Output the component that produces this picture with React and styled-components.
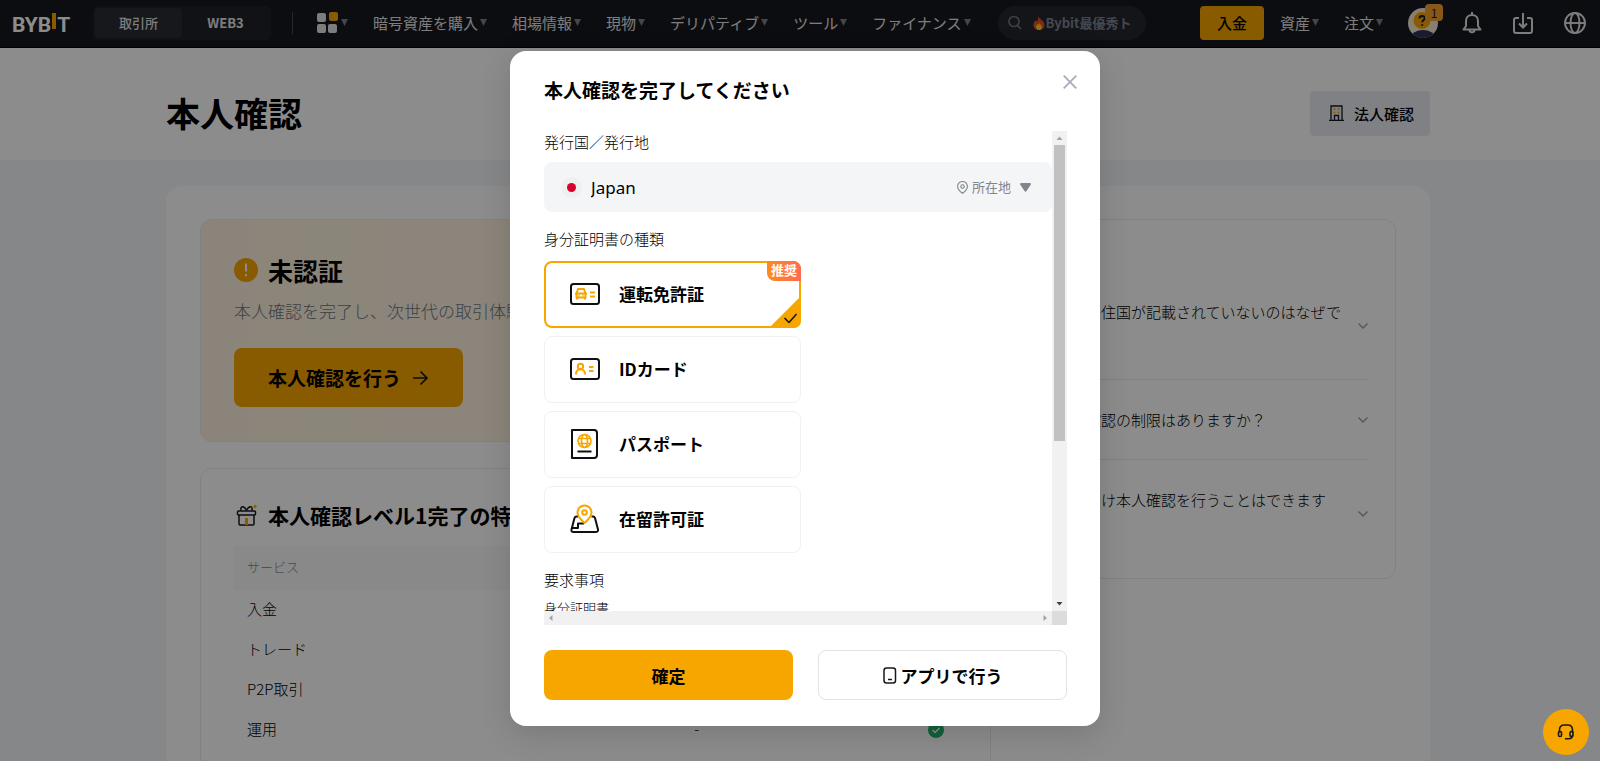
import React from "react";
import styled, { createGlobalStyle } from "styled-components";

const GlobalStyle = createGlobalStyle`
  *, *::before, *::after { box-sizing: border-box; }
  body {
    margin: 0;
    color: #000;
    font-family: "Noto Sans CJK JP", "Noto Sans", sans-serif;
    font-size: 15px;
    font-weight: 300;
  }
  button, input, select { font-family: inherit; color: #000; }
  button { cursor: pointer; }
  h1, h2, p { margin: 0; }
`;

const Page = styled.div`
  position: relative;
  display: flex;
  flex-direction: column;
  height: 100vh;
  overflow: hidden;
  background: #f4f6f9;
`;

/* ---------- header ---------- */

const Header = styled.header`
  flex: none;
  display: flex;
  align-items: center;
  height: 48px;
  padding: 0 14px 2px 12px;
  background: #17181e;
  border-bottom: 1px solid #000;
  color: #e4e4e4;
`;

const Logo = styled.a`
  display: flex;
  align-items: center;
  width: 61px;
  height: 40px;
  padding-top: 4px;
  color: #fff;
  font: 700 21px/24px Roboto, sans-serif;
  text-decoration: none;
`;

const LogoBar = styled.span`
  flex: none;
  width: 4px;
  height: 16px;
  margin: 0 1px 8px;
  background: #f7a600;
`;

const ModeSwitch = styled.div`
  display: flex;
  width: 178px;
  height: 34px;
  margin-left: 20px;
  padding: 2px;
  border-radius: 5px;
  background: #1f2127;
`;

const ModeButton = styled.button`
  flex: 1;
  border: 0;
  border-radius: 4px;
  background: ${(p) => (p.$active ? "#292c33" : "transparent")};
  color: #e4e4e4;
  font-size: 13px;
  font-weight: ${(p) => (p.$active ? 500 : 700)};
`;

const Divider = styled.span`
  width: 1px;
  height: 22px;
  margin: 0 24px 0 21px;
  background: #45474d;
`;

const Nav = styled.nav`
  display: flex;
  align-items: center;
  gap: 25px;
`;

const NavItem = styled.a`
  display: flex;
  align-items: center;
  gap: 2px;
  color: #e4e4e4;
  font-size: 15px;
  font-weight: 400;
  line-height: 24px;
  text-decoration: none;
  white-space: nowrap;
`;

const Search = styled.label`
  display: flex;
  align-items: center;
  width: 148px;
  height: 34px;
  margin-left: 27px;
  padding: 0 12px 0 10px;
  border-radius: 17px;
  background: #25272e;
`;

const SearchInput = styled.input`
  min-width: 0;
  flex: 1;
  padding: 0;
  border: 0;
  outline: 0;
  background: transparent;
  color: #fff;
  font-size: 13px;
  font-weight: 700;
  &::placeholder { color: #7d8494; opacity: 1; }
`;

const Fire = styled.svg`
  flex: none;
  margin: 0 1px 0 11px;
`;

const Actions = styled.div`
  display: flex;
  align-items: center;
  margin-left: auto;
`;

const Deposit = styled.button`
  width: 64px;
  height: 34px;
  margin-right: 16px;
  padding: 0;
  border: 0;
  border-radius: 4px;
  background: #f7a600;
  font-size: 15px;
  font-weight: 500;
`;

const Account = styled.button`
  position: relative;
  display: flex;
  width: 30px;
  height: 30px;
  margin: 0 24px 0 25px;
  padding: 0;
  border: 0;
  background: none;
`;

const Badge = styled.span`
  position: absolute;
  top: -4px;
  right: -5px;
  width: 18px;
  height: 17px;
  border-radius: 4px;
  background: #f7a02c;
  color: #17181e;
  font-size: 12px;
  font-weight: 400;
  line-height: 17px;
  text-align: center;
`;

const IconRow = styled.div`
  display: flex;
  gap: 30px;
`;

const IconButton = styled.button`
  display: flex;
  padding: 0;
  border: 0;
  background: none;
  color: #e4e4e4;
`;

/* ---------- page body ---------- */

const TitleBand = styled.section`
  flex: none;
  height: 112px;
  padding-right: 4px;
  background: #fff;
`;

const Container = styled.div`
  display: flex;
  align-items: center;
  justify-content: space-between;
  max-width: 1264px;
  height: 100%;
  margin: 0 auto;
  padding-top: 18px;
`;

const PageTitle = styled.h1`
  font-size: 34px;
  font-weight: 700;
  line-height: 40px;
`;

const Business = styled.button`
  display: flex;
  align-items: center;
  gap: 10px;
  height: 45px;
  padding: 0 16px 0 19px;
  border: 0;
  border-radius: 4px;
  background: #e9ecf3;
  font-size: 15px;
  font-weight: 500;
`;

const Body = styled.main`
  flex: 1;
  min-height: 0;
  padding: 26px 4px 0 0;
`;

const Sheet = styled.div`
  display: grid;
  grid-template-columns: minmax(0, 791fr) minmax(0, 379fr);
  gap: 26px;
  align-items: start;
  max-width: 1264px;
  margin: 0 auto;
  padding: 33px 34px;
  border-radius: 16px;
  background: #fff;
`;

const Column = styled.div`
  display: flex;
  flex-direction: column;
  gap: 26px;
`;

const Card = styled.section`
  border: 1px solid #e9ebef;
  border-radius: 12px;
  padding: 33px;
`;

const StatusCard = styled(Card)`
  padding: 32px 33px 34px;
  background: linear-gradient(90deg, #fff0de 0%, #fdf4df 15%, #fdf1e4 60%, #fff8f2 100%);
`;

const CardTitle = styled.h2`
  display: flex;
  align-items: center;
  gap: 10px;
  font-size: ${(p) => (p.$large ? 25 : 21)}px;
  font-weight: 700;
  line-height: 36px;
`;

const Lead = styled.p`
  margin: 9px 0 23px;
  color: #71757f;
  font-size: 17px;
  line-height: 28px;
`;

const VerifyButton = styled.button`
  display: flex;
  align-items: center;
  gap: 10px;
  height: 59px;
  padding: 0 34px;
  border: 0;
  border-radius: 8px;
  background: #f7a600;
  font-size: 19px;
  font-weight: 700;
`;

const BenefitCard = styled(Card)`
  padding-top: 28px;
`;

const Table = styled.table`
  width: 100%;
  margin-top: 13px;
  border-collapse: collapse;
`;

const HeadCell = styled.th`
  height: 44px;
  padding: 0 13px 4px;
  background: #f9f9fa;
  color: #81858c;
  font-size: 13px;
  font-weight: 300;
  text-align: ${(p) => p.$align || "left"};
`;

const Cell = styled.td`
  width: ${(p) => p.$width || "auto"};
  height: 40px;
  padding: 0 13px 4px;
  font-size: 15px;
  text-align: ${(p) => p.$align || "left"};
  svg { display: inline-block; vertical-align: middle; }
`;

const FaqCard = styled(Card)`
  padding: 16px 26px 11px 38px;
`;

const FaqTitle = styled.h2`
  font-size: 19px;
  font-weight: 500;
  line-height: 36px;
`;

const Question = styled.button`
  display: flex;
  align-items: center;
  gap: 12px;
  width: 100%;
  padding: 26px 0 25px;
  border: 0;
  border-top: ${(p) => (p.$first ? "0" : "1px solid #e9ebef")};
  background: none;
  font-size: 15px;
  font-weight: 300;
  line-height: 28px;
  text-align: left;
  span { flex: 1; }
  svg { flex: none; }
`;

/* ---------- dialog ---------- */

const Overlay = styled.div`
  position: absolute;
  inset: 0;
  display: flex;
  align-items: flex-start;
  justify-content: center;
  padding: 51px 0 0 10px;
  background: rgba(0, 0, 0, 0.45);
`;

const Dialog = styled.section`
  display: flex;
  flex-direction: column;
  width: 590px;
  max-width: 100%;
  padding: 24px 33px 26px 34px;
  border-radius: 16px;
  background: #fff;
  box-shadow: 0 8px 32px rgba(0, 0, 0, 0.14);
`;

const DialogHead = styled.div`
  display: flex;
  align-items: flex-start;
  justify-content: space-between;
  height: 56px;
`;

const DialogTitle = styled.h2`
  font-size: 19px;
  font-weight: 700;
  line-height: 30px;
`;

const Close = styled.button`
  display: flex;
  margin-right: -10px;
  padding: 0;
  border: 0;
  background: none;
`;

const ScrollFrame = styled.div`
  display: grid;
  grid-template-columns: minmax(0, 1fr) 15px;
  grid-template-rows: 480px 14px;
`;

const ScrollView = styled.div`
  overflow: hidden;
`;

const VerticalBar = styled.div`
  display: flex;
  flex-direction: column;
  align-items: center;
  background: #f1f1f1;
`;

const HorizontalBar = styled.div`
  display: flex;
  justify-content: space-between;
  background: #f1f1f1;
`;

const BarArrow = styled.svg`
  flex: none;
  display: block;
`;

const Thumb = styled.div`
  width: 11px;
  height: 296px;
  margin-bottom: auto;
  background: #c1c1c1;
`;

const Corner = styled.div`
  background: #dcdcdc;
`;

const FieldLabel = styled.label`
  display: block;
  margin-top: ${(p) => (p.$spaced ? 16 : 0)}px;
  font-size: 15px;
  line-height: 22px;
`;

const Group = styled.fieldset`
  min-width: 0;
  margin: 16px 0 0;
  padding: 0;
  border: 0;
`;

const Legend = styled.legend`
  padding: 0;
  font-size: 15px;
  line-height: 22px;
`;

const CountryBox = styled.div`
  display: flex;
  align-items: center;
  height: 50px;
  margin-top: 9px;
  padding: 0 21px 0 17px;
  border-radius: 8px;
  background: #f3f5f7;
  color: #81858c;
`;

const CountrySelect = styled.select`
  flex: 1;
  height: 100%;
  padding: 0 0 0 9px;
  border: 0;
  outline: 0;
  appearance: none;
  background: transparent;
  color: #000;
  font-family: "Noto Sans", sans-serif;
  font-size: 17px;
  font-weight: 400;
`;

const Located = styled.span`
  display: flex;
  align-items: center;
  gap: 4px;
  margin-right: 9px;
  font-size: 13px;
  font-weight: 400;
  line-height: 20px;
`;

const Options = styled.div`
  display: flex;
  flex-direction: column;
  gap: 8px;
  width: 257px;
  margin-top: 11px;
`;

const Option = styled.label`
  position: relative;
  display: flex;
  align-items: center;
  gap: 18px;
  height: 67px;
  padding: 0 0 2px 24px;
  border: 1px solid #f1f1f1;
  border-radius: 8px;
  font-size: 17px;
  font-weight: 700;
  cursor: pointer;
  &:has(input:checked) { border: 2px solid #f7a600; padding-left: 23px; }
`;

const HiddenRadio = styled.input`
  position: absolute;
  opacity: 0;
  margin: 0;
`;

const Recommended = styled.span`
  position: absolute;
  top: -2px;
  right: -2px;
  width: 34px;
  height: 20px;
  border-radius: 0 8px 0 8px;
  background: linear-gradient(90deg, #ff8a1c, #ff6a55);
  color: #fff;
  font-size: 13px;
  font-weight: 700;
  line-height: 18px;
  text-align: center;
`;

const Selected = styled.svg`
  position: absolute;
  right: -2px;
  bottom: -2px;
`;

const Note = styled.p`
  margin-top: 6px;
  font-size: 13px;
  line-height: 22px;
`;

const Footer = styled.div`
  display: grid;
  grid-template-columns: 1fr 1fr;
  gap: 25px;
  margin-top: 25px;
`;

const DialogButton = styled.button`
  display: flex;
  align-items: center;
  justify-content: center;
  gap: 4px;
  height: 50px;
  border: ${(p) => (p.$primary ? "0" : "1px solid #e2e3e8")};
  border-radius: 8px;
  background: ${(p) => (p.$primary ? "#f7a600" : "#fff")};
  font-size: 17px;
  font-weight: 700;
`;

const Help = styled.button`
  position: absolute;
  right: 11px;
  bottom: 6px;
  display: flex;
  align-items: center;
  justify-content: center;
  width: 46px;
  height: 46px;
  padding: 0;
  border: 0;
  border-radius: 50%;
  background: #f7a600;
`;

/* ---------- icons ---------- */

const Caret = () => (
  <svg width="7" height="7" viewBox="0 0 7 7"><path d="M0 0h7L3.5 7z" fill="#7c7e84" /></svg>
);

const Chevron = () => (
  <svg width="12" height="8" viewBox="0 0 12 8" fill="none">
    <path d="M1.5 1.5 6 6l4.500-4.500" stroke="#9a9da6" strokeWidth="1.400" />
  </svg>
);

const AppsIcon = () => (
  <svg width="22" height="21" viewBox="0 0 22 21" fill="#e4e4e4">
    <rect x="0" y="1" width="9" height="9" rx="2" />
    <rect x="12" y="0" width="9" height="9" rx="2" fill="#f7a600" />
    <rect x="0" y="12" width="9" height="9" rx="2" />
    <rect x="11" y="12" width="9" height="9" rx="2" />
  </svg>
);

const SearchIcon = () => (
  <svg width="14" height="15" viewBox="0 0 14 15" fill="none" stroke="#71747c" strokeWidth="1.700">
    <circle cx="6" cy="6.500" r="5" /><path d="m9.500 10.500 3.500 3.500" />
  </svg>
);

const AvatarIcon = () => (
  <svg width="30" height="30" viewBox="0 0 30 30">
    <clipPath id="face"><circle cx="15" cy="15" r="15" /></clipPath>
    <g clipPath="url(#face)">
      <rect width="30" height="30" fill="#f5ead0" />
      <ellipse cx="15" cy="30" rx="12" ry="8" fill="#2a3358" />
    </g>
    <circle cx="14" cy="12.500" r="8.500" fill="#f7a600" />
    <path d="M11.500 10.500c.2-3.500 5.400-3.200 5.200-.2-.1 1.700-2.400 1.900-2.500 3.900m0 2v1.600" fill="none" stroke="#17181e" strokeWidth="2" />
  </svg>
);

const BellIcon = () => (
  <svg width="20" height="22" viewBox="0 0 20 22" fill="none" stroke="currentColor" strokeWidth="2" strokeLinejoin="round">
    <path d="M10 0v3M10 3C6.300 3 4 5.800 4 9v5l-2.500 3.500h17L16 14V9c0-3.200-2.300-6-6-6zM7.500 18c.2 3 4.800 3 5 0" />
  </svg>
);

const DownloadIcon = () => (
  <svg width="22" height="22" viewBox="0 0 22 22" fill="none" stroke="currentColor" strokeWidth="2">
    <path d="M7 6H4Q2 6 2 8v11q0 2 2 2h14q2 0 2-2V8q0-2-2-2h-3M11 1v14M7 11.500l4 4 4-4" />
  </svg>
);

const GlobeIcon = () => (
  <svg width="22" height="22" viewBox="0 0 22 22" fill="none" stroke="currentColor" strokeWidth="1.900">
    <circle cx="11" cy="11" r="10" /><ellipse cx="11" cy="11" rx="4.500" ry="10" /><path d="M1 11h20" />
  </svg>
);

const BuildingIcon = () => (
  <svg width="15" height="16" viewBox="0 0 15 16" fill="none" stroke="#17181e" strokeWidth="1.300">
    <path d="M0 15.300h15M2 15V1h11v14M5.500 15v-4.500h4V15" />
    <path d="M5.500 3v2m0 1.500v2M9.500 3v2m0 1.500v2" stroke="#f7a600" strokeWidth="2" />
  </svg>
);

const WarnIcon = () => (
  <svg width="24" height="24" viewBox="0 0 24 24">
    <circle cx="12" cy="12" r="12" fill="#f7a600" />
    <path d="M12 5.500v8m0 2.500v2.200" stroke="#fff" strokeWidth="2" />
  </svg>
);

const ArrowIcon = () => (
  <svg width="18" height="18" viewBox="0 0 18 18" fill="none" stroke="#17181e" strokeWidth="1.700">
    <path d="M2 9h13.500M9.500 2.500 16 9l-6.500 6.500" />
  </svg>
);

const GiftIcon = () => (
  <svg width="24" height="24" viewBox="0 0 24 24" fill="none" stroke="#17181e" strokeWidth="1.500">
    <rect x="3.500" y="8" width="18" height="4" rx="1" />
    <path d="M5 12v9q0 1 1 1h13q1 0 1-1v-9M12.500 7.500C10 2 6 3 7 7.500M12.500 7.500C15 2 19 3 18 7.500" />
    <path d="M11 15h3v7h-3zM21 1l.8 1.800L23.500 3.500l-1.700.8L21 6l-.8-1.700-1.700-.8 1.700-.7z" fill="#f7a600" stroke="none" />
  </svg>
);

const CheckIcon = () => (
  <svg width="16" height="16" viewBox="0 0 16 16">
    <circle cx="8" cy="8" r="8" fill="#20b26c" />
    <path d="m4.500 8 2.500 2.500L11.500 6" fill="none" stroke="#fff" strokeWidth="1.500" />
  </svg>
);

const FlagIcon = () => (
  <svg width="21" height="21" viewBox="0 0 21 21">
    <circle cx="10.500" cy="10.500" r="10.500" fill="#efefef" /><circle cx="10.500" cy="10.500" r="4.500" fill="#d80027" />
  </svg>
);

const PinIcon = () => (
  <svg width="11" height="13" viewBox="0 0 11 13" fill="none" stroke="#81858c" strokeWidth="1.100">
    <path d="M5.500 12.300C2.500 10 .6 8 .6 5.400a4.900 4.900 0 0 1 9.800 0c0 2.600-1.900 4.600-4.900 6.900z" /><circle cx="5.500" cy="5.500" r="1.700" />
  </svg>
);

const OptionIcon = ({ children }) => (
  <svg width="32" height="32" viewBox="0 0 32 32" fill="none" stroke="#101010" strokeWidth="2" strokeLinejoin="round">
    {children}
  </svg>
);

const LicenceIcon = () => (
  <OptionIcon>
    <rect x="2" y="6" width="28" height="20" rx="2.500" />
    <g stroke="#f7a600">
      <path d="M6 15.500h12M7.500 15.500l1.500-4.500h6l1.500 4.500v4h-9zM8 19v2.500M16 19v2.500M9.500 17.500h1M13.500 17.500h1M21 14.500h5M21 18.500h5" />
    </g>
  </OptionIcon>
);

const IdIcon = () => (
  <OptionIcon>
    <rect x="2" y="6" width="28" height="20" rx="2.500" />
    <g stroke="#f7a600">
      <circle cx="11.500" cy="13.500" r="2.700" /><path d="M7 21.500c0-7 9-7 9 0M20 14h4.500M20 18h4.500" />
    </g>
  </OptionIcon>
);

const PassportIcon = () => (
  <OptionIcon>
    <path d="M3 2h22q3 0 3 3v22q0 3-3 3H3zM8.500 23.500h14" />
    <g stroke="#f7a600" strokeWidth="1.600">
      <circle cx="15.500" cy="13" r="6.500" /><ellipse cx="15.500" cy="13" rx="3" ry="6.500" /><path d="M9.500 10.500h12M9.500 15.500h12" />
    </g>
  </OptionIcon>
);

const ResidenceIcon = () => (
  <OptionIcon>
    <path d="M9 13.500H7.500Q6 13.500 5.500 15L2.500 26.500Q2 29 4.500 29h22q3 0 2.500-2.500L26 15q-.5-1.500-2-1.500h-1.500M3 25h6v-4.500h6" />
    <path d="M15.500 20C11 16 8.500 13 8.500 9.500a7 7 0 0 1 14 0c0 3.500-2.500 6.500-7 10.500z" stroke="#f7a600" fill="#fff" />
    <circle cx="15.500" cy="9.500" r="2.300" stroke="#f7a600" />
  </OptionIcon>
);

const PhoneIcon = () => (
  <svg width="14" height="17" viewBox="0 0 14 17" fill="none" stroke="#17181e" strokeWidth="1.500">
    <rect x="1" y="1" width="11.500" height="15" rx="2.500" /><path d="M5 12.500h4" />
  </svg>
);

const HeadsetIcon = () => (
  <svg width="18" height="18" viewBox="0 0 18 18" fill="none" stroke="#17181e" strokeWidth="1.600">
    <path d="M2.500 9.500V7q0-5 5-5h3q5 0 5 5v3M15.500 12q0 3.800-4 3.800H8" />
    <rect x="1.500" y="8.500" width="3" height="5" rx="1.300" /><rect x="13" y="8.500" width="3" height="5" rx="1.300" />
  </svg>
);

/* ---------- data ---------- */

const menus = ["暗号資産を購入", "相場情報", "現物", "デリパティブ", "ツール", "ファイナンス"];
const services = [
  { name: "入金" },
  { name: "トレード" },
  { name: "P2P取引" },
  { name: "運用" },
];
const questions = [
  "私の居住国が記載されていないのはなぜですか？",
  "本人確認の制限はありますか？",
  "法人向け本人確認を行うことはできますか？",
];
const documents = [
  { id: "licence", label: "運転免許証", Icon: LicenceIcon, recommended: true },
  { id: "id", label: "IDカード", Icon: IdIcon },
  { id: "passport", label: "パスポート", Icon: PassportIcon },
  { id: "residence", label: "在留許可証", Icon: ResidenceIcon },
];

function TopBar() {
  return (
    <Header>
      <Logo href="#" aria-label="BYBIT">BYB<LogoBar />T</Logo>
      <ModeSwitch>
        <ModeButton type="button" $active>取引所</ModeButton>
        <ModeButton type="button">WEB3</ModeButton>
      </ModeSwitch>
      <Divider />
      <Nav>
        <NavItem href="#" aria-label="アプリ"><AppsIcon /><Caret /></NavItem>
        {menus.map((m) => (
          <NavItem href="#" key={m}>{m}<Caret /></NavItem>
        ))}
      </Nav>
      <Search>
        <SearchIcon />
        <Fire width="12" height="14" viewBox="0 0 12 14">
          <path d="M5 0c1 3 6.500 4.500 6.500 9 0 3-2.500 5-5.500 5S.5 12 .5 9c0-2.500 1.500-3.500 2-5 1 .5 1.300 1.300 1.500 2C5 4 5.500 2 5 0z" fill="#e8501e" />
          <path d="M6 6.500c.5 2 3 2.500 3 4.500S7.700 14 6 14s-3-1-3-3c0-1.500 1-2 1.500-3 .5.300.7.700.8 1 .5-.7.800-1.500.7-2.500z" fill="#ffc72c" />
        </Fire>
        <SearchInput type="text" aria-label="検索" placeholder="Bybit最優秀トレーダー" />
      </Search>
      <Actions>
        <Deposit type="button">入金</Deposit>
        <Nav>
          <NavItem href="#">資産<Caret /></NavItem>
          <NavItem href="#">注文<Caret /></NavItem>
        </Nav>
        <Account type="button" aria-label="アカウント"><AvatarIcon /><Badge>1</Badge></Account>
        <IconRow>
          <IconButton type="button" aria-label="通知"><BellIcon /></IconButton>
          <IconButton type="button" aria-label="ダウンロード"><DownloadIcon /></IconButton>
          <IconButton type="button" aria-label="言語"><GlobeIcon /></IconButton>
        </IconRow>
      </Actions>
    </Header>
  );
}

function Benefits() {
  return (
    <BenefitCard>
      <CardTitle><GiftIcon />本人確認レベル1完了の特典</CardTitle>
      <Table>
        <thead>
          <tr>
            <HeadCell>サービス</HeadCell>
            <HeadCell $align="center">未認証</HeadCell>
            <HeadCell $align="right">レベル1</HeadCell>
          </tr>
        </thead>
        <tbody>
          {services.map((s) => (
            <tr key={s.name}>
              <Cell $width="48%">{s.name}</Cell>
              <Cell $align="center">-</Cell>
              <Cell $width="20%" $align="right"><CheckIcon /></Cell>
            </tr>
          ))}
        </tbody>
      </Table>
    </BenefitCard>
  );
}

function VerifyDialog() {
  return (
    <Overlay>
      <Dialog role="dialog" aria-labelledby="dialog-title">
        <DialogHead>
          <DialogTitle id="dialog-title">本人確認を完了してください</DialogTitle>
          <Close type="button" aria-label="閉じる">
            <svg width="14" height="14" viewBox="0 0 14 14"><path d="m.7.700 12.600 12.600M13.300.700.7 13.300" stroke="#a9adb8" strokeWidth="1.800" /></svg>
          </Close>
        </DialogHead>
        <ScrollFrame>
          <ScrollView>
            <FieldLabel htmlFor="country">発行国／発行地</FieldLabel>
            <CountryBox>
              <FlagIcon />
              <CountrySelect id="country" defaultValue="jp"><option value="jp">Japan</option></CountrySelect>
              <Located><PinIcon />所在地</Located>
              <svg width="11" height="9" viewBox="0 0 11 9"><path d="M1 0h9q1.500.5.700 1.800L6.500 8q-1 1.500-2 0L.3 1.800Q-.5.500 1 0z" fill="#81858c" /></svg>
            </CountryBox>
            <Group>
              <Legend>身分証明書の種類</Legend>
              <Options>
                {documents.map(({ id, label, Icon, recommended }) => (
                  <Option key={id}>
                    <HiddenRadio type="radio" name="document" value={id} defaultChecked={recommended} />
                    <Icon />
                    {label}
                    {recommended && (
                      <>
                        <Recommended>推奨</Recommended>
                        <Selected width="32" height="32" viewBox="0 0 32 32">
                          <path d="M32 0v24q0 8-8 8H0z" fill="#f7a600" />
                          <path d="m15.500 22 4.500 4.500 7.500-8.500" fill="none" stroke="#101010" strokeWidth="1.500" />
                        </Selected>
                      </>
                    )}
                  </Option>
                ))}
              </Options>
            </Group>
            <FieldLabel as="p" $spaced>要求事項</FieldLabel>
            <Note>身分証明書</Note>
          </ScrollView>
          <VerticalBar>
            <BarArrow width="15" height="14" viewBox="0 0 15 14"><path d="M4.500 9h6l-3-3.500z" fill="#a3a3a3" /></BarArrow>
            <Thumb />
            <BarArrow width="15" height="14" viewBox="0 0 15 14"><path d="M4.500 5h6l-3 3.500z" fill="#404040" /></BarArrow>
          </VerticalBar>
          <HorizontalBar>
            <BarArrow width="14" height="14" viewBox="0 0 14 14"><path d="M8.500 4v6L5 7z" fill="#a3a3a3" /></BarArrow>
            <BarArrow width="14" height="14" viewBox="0 0 14 14"><path d="M5.500 4v6L9 7z" fill="#a3a3a3" /></BarArrow>
          </HorizontalBar>
          <Corner />
        </ScrollFrame>
        <Footer>
          <DialogButton type="button" $primary>確定</DialogButton>
          <DialogButton type="button"><PhoneIcon />アプリで行う</DialogButton>
        </Footer>
      </Dialog>
    </Overlay>
  );
}

export default function App() {
  return (
    <Page>
      <GlobalStyle />
      <TopBar />
      <TitleBand>
        <Container>
          <PageTitle>本人確認</PageTitle>
          <Business type="button"><BuildingIcon />法人確認</Business>
        </Container>
      </TitleBand>
      <Body>
        <Sheet>
          <Column>
            <StatusCard>
              <CardTitle $large><WarnIcon />未認証</CardTitle>
              <Lead>本人確認を完了し、次世代の取引体験を始めましょう。</Lead>
              <VerifyButton type="button">本人確認を行う<ArrowIcon /></VerifyButton>
            </StatusCard>
            <Benefits />
          </Column>
          <FaqCard>
            <FaqTitle>FAQ</FaqTitle>
            {questions.map((q, i) => (
              <Question type="button" key={q} $first={i === 0}><span>{q}</span><Chevron /></Question>
            ))}
          </FaqCard>
        </Sheet>
      </Body>
      <VerifyDialog />
      <Help type="button" aria-label="サポート"><HeadsetIcon /></Help>
    </Page>
  );
}
